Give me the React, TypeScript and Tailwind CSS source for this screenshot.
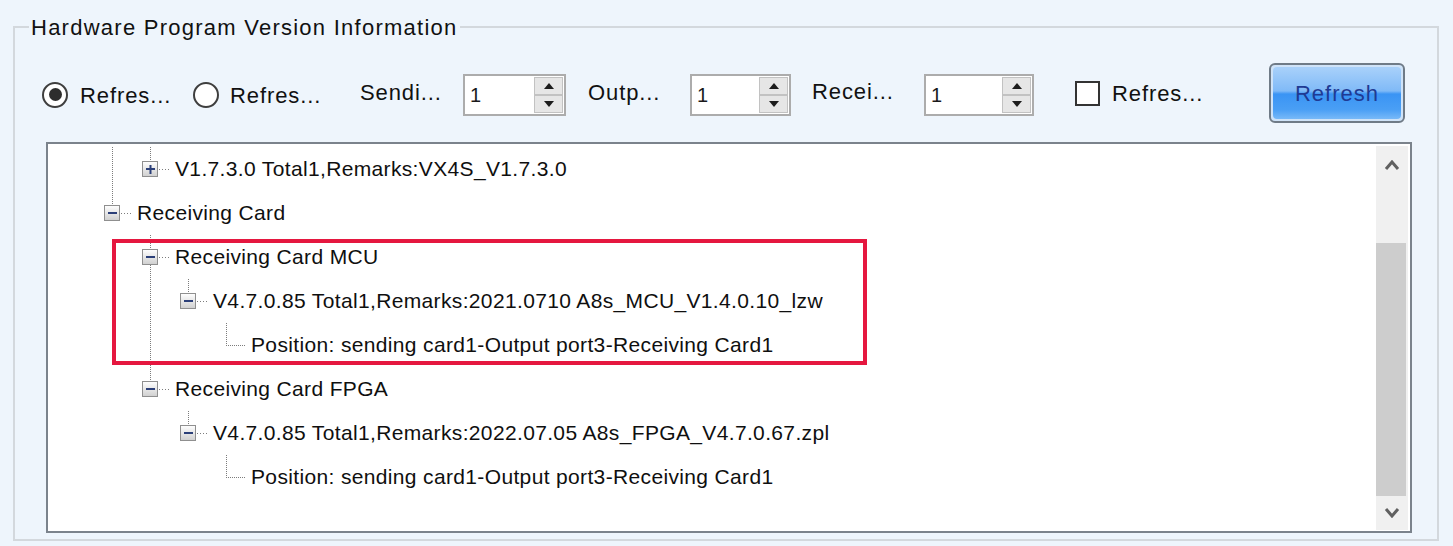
import type { ReactNode } from 'react'

type Seg = [number, number, number]

interface Row {
  level: number
  text: string
  box?: '+' | '-'
  segs: Seg[]
}

const cx = (level: number) => 64 + 38 * level

const rows: Row[] = [
  { level: 1, box: '+', text: 'V1.7.3.0 Total1,Remarks:VX4S_V1.7.3.0', segs: [[64, 0, 44], [102, 0, 14]] },
  { level: 0, box: '-', text: 'Receiving Card', segs: [[64, 0, 14]] },
  { level: 1, box: '-', text: 'Receiving Card MCU', segs: [[102, 0, 14], [102, 30, 44]] },
  { level: 2, box: '-', text: 'V4.7.0.85 Total1,Remarks:2021.0710 A8s_MCU_V1.4.0.10_lzw', segs: [[102, 0, 44], [140, 0, 14]] },
  { level: 3, text: 'Position: sending card1-Output port3-Receiving Card1', segs: [[102, 0, 44], [178, 0, 22]] },
  { level: 1, box: '-', text: 'Receiving Card FPGA', segs: [[102, 0, 14]] },
  { level: 2, box: '-', text: 'V4.7.0.85 Total1,Remarks:2022.07.05 A8s_FPGA_V4.7.0.67.zpl', segs: [[140, 0, 14]] },
  { level: 3, text: 'Position: sending card1-Output port3-Receiving Card1', segs: [[178, 0, 22]] },
]

function TreeRow({ row }: { row: Row }) {
  const c = cx(row.level)
  const width = c + 22
  return (
    <div className="flex items-center h-[44px]">
      <svg width={width} height={44} className="shrink-0">
        <defs>
          <linearGradient id="boxfill" x1="0" y1="0" x2="0" y2="1">
            <stop offset="0" stopColor="#ffffff" />
            <stop offset="1" stopColor="#cfcfcf" />
          </linearGradient>
        </defs>
        {row.segs.map(([x, y1, y2], i) => (
          <line key={i} x1={x + 0.5} y1={y1} x2={x + 0.5} y2={y2} stroke="#7c7c7c" strokeDasharray="1 1" />
        ))}
        {row.box ? (
          <>
            <line x1={c + 9} y1={22.5} x2={c + 21} y2={22.5} stroke="#7c7c7c" strokeDasharray="1 2" />
            <rect x={c - 7.5} y={14.5} width={15} height={15} fill="url(#boxfill)" stroke="#8f8f8f" />
            <line x1={c - 4} y1={22} x2={c + 5} y2={22} stroke="#2b3f78" strokeWidth={2} />
            {row.box === '+' && <line x1={c + 0.5} y1={18} x2={c + 0.5} y2={27} stroke="#2b3f78" strokeWidth={2} />}
          </>
        ) : (
          <line x1={c} y1={22.5} x2={c + 19} y2={22.5} stroke="#7c7c7c" strokeDasharray="1 1" />
        )}
      </svg>
      <span className="pl-[3px] text-[21px] tracking-[0.35px] text-[#0f0f0f] whitespace-nowrap">{row.text}</span>
    </div>
  )
}

function Radio({ checked, className }: { checked?: boolean; className?: string }) {
  return (
    <span
      className={`w-[26px] h-[26px] shrink-0 rounded-full border-2 border-[#3e3e3e] bg-white flex items-center justify-center ${className ?? ''}`}
    >
      {checked && <span className="w-[13px] h-[13px] rounded-full bg-[#2d2d2d]" />}
    </span>
  )
}

function Label({ children, className }: { children: ReactNode; className: string }) {
  return <span className={`shrink-0 whitespace-nowrap text-[22px] tracking-[0.9px] text-[#111111] ${className}`}>{children}</span>
}

function Arrow({ up }: { up?: boolean }) {
  return (
    <span className="flex-1 flex items-center justify-center bg-[#e6e6e6] border border-[#c2c2c2]">
      <svg width="10" height="6" viewBox="0 0 10 6">
        {up ? <path d="M5 0 L10 6 L0 6 Z" fill="#1c1c1c" /> : <path d="M0 0 L10 0 L5 6 Z" fill="#1c1c1c" />}
      </svg>
    </span>
  )
}

function Spin({ className }: { className: string }) {
  return (
    <div className={`shrink-0 flex h-[42px] border-2 border-[#acacac] bg-white ${className}`}>
      <span className="flex-1 pl-[5px] text-[20px] leading-[38px] text-[#1a1a1a]">1</span>
      <div className="flex flex-col w-[29px] my-[1px] mr-[1px]">
        <Arrow up />
        <Arrow />
      </div>
    </div>
  )
}

function Chevron({ up }: { up?: boolean }) {
  return (
    <svg width="16" height="10" viewBox="0 0 16 10">
      <path d={up ? 'M2 9 L8 2 L14 9' : 'M2 1 L8 8 L14 1'} fill="none" stroke="#606060" strokeWidth={3} />
    </svg>
  )
}

export default function App() {
  return (
    <div className="w-[1453px] h-[546px] overflow-hidden bg-[#eef5fc] pt-[26px] font-['Liberation_Sans',Arial,sans-serif]">
      <div className="relative ml-[13px] w-[1426px] h-[515px] border-2 border-[#d3d8dd]">
        <span className="absolute left-[14px] top-[-13px] px-[2px] bg-[#eef5fc] text-[22px] leading-[26px] tracking-[1.25px] text-[#111111] whitespace-nowrap">
          Hardware Program Version Information
        </span>

        <div className="flex items-center h-[60px] mt-[35px] ml-[27px]">
          <Radio checked className="mt-[3px]" />
          <Label className="ml-[12px] w-[92px] mt-[5px]">Refres...</Label>
          <Radio className="ml-[21px] mt-[3px]" />
          <Label className="ml-[11px] w-[92px] mt-[5px]">Refres...</Label>
          <Label className="ml-[38px] w-[81px] mt-[-2px]">Sendi...</Label>
          <Spin className="ml-[22px] w-[103px] mt-[3px]" />
          <Label className="ml-[22px] w-[70px] mt-[-2px]">Outp...</Label>
          <Spin className="ml-[32px] w-[101px] mt-[3px]" />
          <Label className="ml-[21px] w-[81px] mt-[-3px]">Recei...</Label>
          <Spin className="ml-[31px] w-[110px] mt-[3px]" />
          <span className="ml-[41px] w-[25px] h-[25px] shrink-0 border-2 border-[#333333] bg-white mt-[1px]" />
          <Label className="ml-[12px] w-[92px]">Refres...</Label>
          <button className="ml-[65px] w-[136px] h-[60px] shrink-0 rounded-[6px] border-2 border-[#6f7b87] bg-[#cfe3f8] p-[2px]">
            <span className="flex h-full items-center justify-center rounded-[4px] bg-[linear-gradient(to_bottom,#a9d1fa_0%,#80baf7_46%,#3a94f4_52%,#4a9ff5_82%,#78b9f8_100%)] text-[22px] tracking-[1px] text-[#1f3a93]">
              Refresh
            </span>
          </button>
        </div>

        <div className="flex ml-[31px] mt-[19px] w-[1366px] h-[391px] border-2 border-[#7b838c] bg-white pt-[2px] pb-[1px] pr-[2px]">
          <div className="relative flex-1 pt-[1px] overflow-hidden">
            {rows.map((row, i) => (
              <TreeRow key={i} row={row} />
            ))}
            <div className="absolute left-[64px] top-[93px] w-[755px] h-[126px] border-4 border-[#e5173f]" />
          </div>
          <div className="w-[32px] flex flex-col bg-[#f0f0f0]">
            <div className="h-[38px] flex items-center justify-center">
              <Chevron up />
            </div>
            <div className="h-[59px]" />
            <div className="h-[253px] w-[30px] bg-[#cdcdcd]" />
            <div className="flex-1 flex items-center justify-center">
              <Chevron />
            </div>
          </div>
        </div>
      </div>
    </div>
  )
}
